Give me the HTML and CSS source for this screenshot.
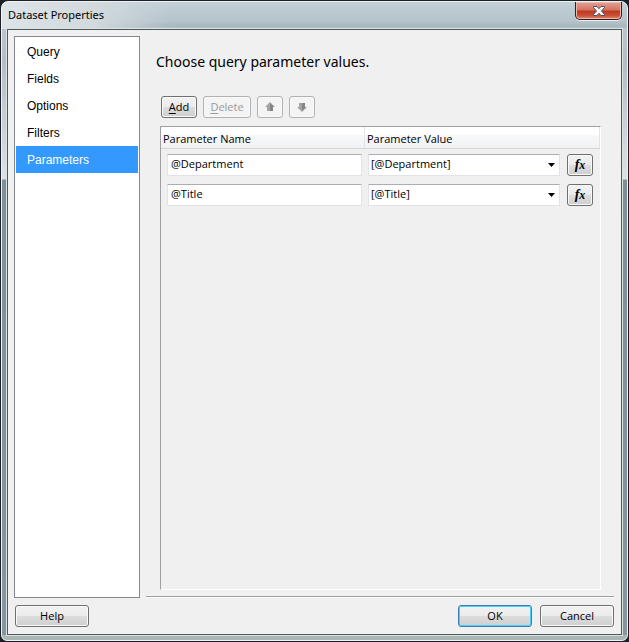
FILE: index.html
```html
<!DOCTYPE html>
<html lang="en">
<head>
<meta charset="utf-8">
<title>Dataset Properties</title>
<link rel="stylesheet" href="styles.css">
</head>
<body>
<div class="window">
  <header class="titlebar">
    <h1 class="title">Dataset Properties</h1>
    <button class="close" type="button" aria-label="Close">
      <svg width="14" height="12" viewBox="0 0 14 12"><path d="M1.5 1.500H5L7 3.700 9 1.500h3.500v1L9.500 6l3 3.500v1H9L7 8.300 5 10.500H1.500v-1L4.500 6l-3-3.500z" fill="#f5f5f5" stroke="#4b4f63"/></svg>
    </button>
  </header>
  <form class="client">
    <div class="body">
      <nav class="pages">
        <a class="page" href="#query">Query</a>
        <a class="page" href="#fields">Fields</a>
        <a class="page" href="#options">Options</a>
        <a class="page" href="#filters">Filters</a>
        <a class="page current" href="#parameters" aria-current="page">Parameters</a>
      </nav>
      <main class="content">
        <h2 class="heading">Choose query parameter values.</h2>
        <div class="toolbar">
          <button class="btn add" type="button"><u>A</u>dd</button>
          <button class="btn delete" type="button" disabled><u>D</u>elete</button>
          <button class="btn icon" type="button" disabled aria-label="Move up">
            <svg width="10" height="10" viewBox="0 0 10 10"><path d="M5 0 10 5H8v4H2V5H0z" fill="#a5a5a5"/><path d="M5 1v8h3V5h1z" fill="#858585"/></svg>
          </button>
          <button class="btn icon" type="button" disabled aria-label="Move down">
            <svg width="10" height="10" viewBox="0 0 10 10"><path d="M5 10 0 5h2V1h6v4h2z" fill="#a5a5a5"/><path d="M5 9V1h3v4h1z" fill="#858585"/></svg>
          </button>
        </div>
        <div class="grid">
          <table class="params">
            <colgroup><col class="col-name"><col><col class="col-fx"></colgroup>
            <thead>
              <tr><th scope="col">Parameter Name</th><th scope="col" colspan="2">Parameter Value</th></tr>
            </thead>
            <tbody>
              <tr>
                <td class="name"><input class="field" type="text" value="@Department" aria-label="Parameter name 1"></td>
                <td class="value"><div class="combo"><select class="field" aria-label="Parameter value 1"><option>[@Department]</option></select><svg class="arrow" width="7" height="4" viewBox="0 0 7 4"><path d="M0 0h7L3.500 4z"/></svg></div></td>
                <td class="expr"><button class="btn fx" type="button" aria-label="Expression for @Department"><i>f</i><i class="sub">x</i></button></td>
              </tr>
              <tr>
                <td class="name"><input class="field" type="text" value="@Title" aria-label="Parameter name 2"></td>
                <td class="value"><div class="combo"><select class="field" aria-label="Parameter value 2"><option>[@Title]</option></select><svg class="arrow" width="7" height="4" viewBox="0 0 7 4"><path d="M0 0h7L3.500 4z"/></svg></div></td>
                <td class="expr"><button class="btn fx" type="button" aria-label="Expression for @Title"><i>f</i><i class="sub">x</i></button></td>
              </tr>
            </tbody>
          </table>
        </div>
        <hr class="rule">
      </main>
    </div>
    <footer class="footer">
      <button class="btn wide help" type="button">Help</button>
      <button class="btn wide default" type="button">OK</button>
      <button class="btn wide" type="button">Cancel</button>
    </footer>
  </form>
</div>
</body>
</html>
```
FILE: styles.css
```css
* { box-sizing: border-box; }

body {
  margin: 0;
  min-height: 100vh;
  display: flex;
  padding: 1px;
  background: #1c2029;
  color: #000;
  font: 11px/16px "Open Sans", "Noto Sans", sans-serif;
}

.window {
  flex: 1;
  min-width: 0;
  display: flex;
  flex-direction: column;
  padding: 0 5px 5px;
  border: 1px solid #eef3f5;
  border-radius: 7px 7px 6px 6px;
  background:
    linear-gradient(90deg, #dde3e6 0, #d2dade 90px, transparent 170px) 0 0 / 100% 27px no-repeat,
    linear-gradient(#c3d0d7, #b5c3ca 19px, #a8b9bd 24px, #b7c3c8) 0 0 / 100% 27px no-repeat,
    linear-gradient(#a9b6b3, #a9b6b3) 0 100% / 100% 5px no-repeat,
    linear-gradient(#c4ccd2 0, #b4bdc6 60px, #dde1e4 177px, #7f8f99 178px, #8696a0);
}

.titlebar {
  display: flex;
  justify-content: space-between;
  height: 27px;
  flex: none;
}

.title {
  margin: 4px 0 0 1px;
  font-size: 11px;
  line-height: 17px;
  font-weight: 400;
  font-family: "Noto Sans", "Open Sans", sans-serif;
}

.close {
  width: 47px;
  height: 18px;
  padding: 0;
  display: flex;
  align-items: center;
  justify-content: center;
  border: 1px solid #3c191a;
  border-top: 0;
  border-radius: 0 0 5px 5px;
  background: linear-gradient(#e3a294, #d37464 8px, #bd3a21 9px, #c94c31 13px, #de8671);
  box-shadow: inset 0 0 0 1px #ecb9ad, 0 1px 0 #e7edf0;
}

.client {
  flex: 1;
  display: flex;
  flex-direction: column;
  min-height: 0;
  margin: 0;
  padding: 6px 7px 7px 6px;
  border: 1px solid #50585a;
  background: #f0f0f0;
  box-shadow: 0 0 0 1px #d9e3e5;
}

.body {
  flex: 1;
  display: flex;
  gap: 6px;
}

.pages {
  flex: none;
  width: 126px;
  padding: 1px;
  border: 1px solid #828790;
  background: #fff;
  font: 12px/27px "Liberation Sans", Arial, sans-serif;
}

.page {
  display: block;
  padding: 1px 0 0 11px;
  height: 27px;
  color: #000;
  text-decoration: none;
}

.page.current {
  background: #3399ff;
  color: #fff;
}

.content {
  flex: 1;
  min-width: 0;
  display: flex;
  flex-direction: column;
}

.heading {
  margin: 16px 0 0 10px;
  font-size: 14px;
  line-height: 20px;
  font-weight: 400;
  font-family: "Noto Sans", "Open Sans", sans-serif;
}

.toolbar {
  display: flex;
  gap: 6px;
  margin: 24px 0 8px 15px;
}

.btn {
  height: 22px;
  padding: 0;
  border: 1px solid #707070;
  border-radius: 3px;
  background: linear-gradient(#f2f2f2, #ebebeb 50%, #dddddd 50%, #cfcfcf);
  box-shadow: inset 0 0 0 1px #fafafa;
  color: #000;
  font: inherit;
}

.btn:disabled {
  border-color: #adb2b5;
  background: #f4f4f4;
  color: #9a9a9a;
}

.btn u { text-underline-offset: 2px; }

.add { width: 36px; }
.delete { width: 48px; }

.icon {
  width: 26px;
  display: flex;
  align-items: center;
  justify-content: center;
}

.grid {
  flex: 1;
  margin: 0 13px 6px 14px;
  border: 1px solid #a0a0a0;
  border-right-color: #fff;
  border-bottom-color: #fff;
}

.params {
  width: 100%;
  table-layout: fixed;
  border-collapse: separate;
  border-spacing: 0;
}

.col-name { width: 204px; }
.col-fx { width: 40px; }

th {
  height: 22px;
  padding: 2px 2px 0;
  border-right: 1px solid #e0e3e8;
  border-bottom: 1px solid #d5d5d5;
  background: linear-gradient(#fff 40%, #f7f8fa 40%, #f1f2f4);
  text-align: left;
  font-weight: 400;
}

td {
  height: 30px;
  padding: 5px 0 3px;
  vertical-align: top;
}

.name { padding-left: 6px; padding-right: 3px; }
.value { padding-left: 3px; }
.expr { padding-left: 7px; }

.field {
  display: block;
  width: 100%;
  height: 22px;
  margin: 0;
  padding: 0 3px 3px;
  border: 1px solid #e2e3ea;
  border-top-color: #abadb3;
  border-radius: 1px;
  background: #fff;
  color: #000;
  font: inherit;
  appearance: none;
}

.combo { position: relative; }

select.field { padding: 0 2px 2px; }

.arrow {
  position: absolute;
  top: 9px;
  right: 5px;
  pointer-events: none;
}

.fx {
  display: block;
  width: 26px;
  font: bold 14px/16px "Liberation Serif", serif;
}

.fx .sub { font-size: 12px; }

.rule {
  width: 100%;
  height: 2px;
  margin: 0;
  border: 0;
  border-top: 1px solid #a0a0a0;
  border-bottom: 1px solid #fff;
}

.footer {
  display: flex;
  gap: 8px;
  padding: 7px 0 0 1px;
}

.wide { width: 74px; }
.help { margin-right: auto; }

.default {
  border-color: #3c7fb1;
  box-shadow: inset 0 0 0 1px #46d0f7;
}
```
